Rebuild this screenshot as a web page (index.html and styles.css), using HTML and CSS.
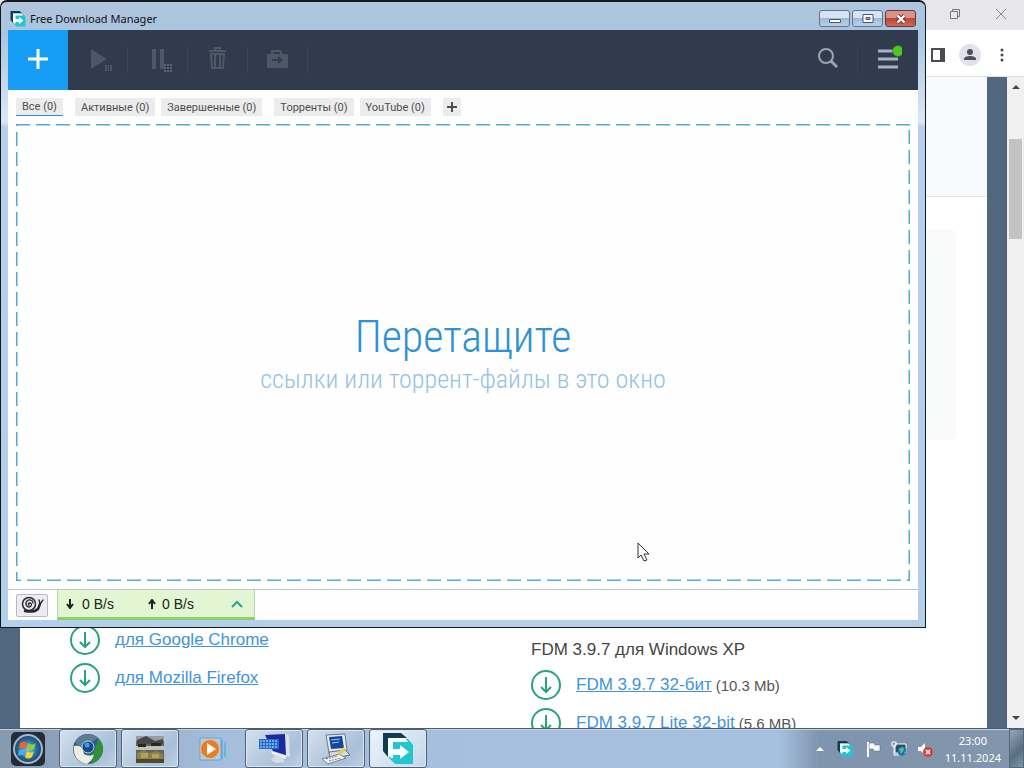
FILE: index.html
```html
<!DOCTYPE html>
<html lang="ru">
<head>
<meta charset="utf-8">
<title>Free Download Manager</title>
<link rel="stylesheet" href="styles.css">
</head>
<body>
<svg class="defs" aria-hidden="true">
  <symbol id="fdm" viewBox="0 0 32 32">
    <path d="M1 0h18l6 5H6v19l-5-6z" fill="#0e3c50"/>
    <path d="M9 6h17l5 6v19H13l-6-6V8z" fill="#22c6cf"/>
    <path d="M6 5h17l3 4H11v7h7v-4l9 7-9 7v-4h-7v3H9l-3-3z" fill="#f8ffff"/>
  </symbol>
  <symbol id="get" viewBox="0 0 30 30">
    <circle cx="15" cy="15" r="14" fill="none" stroke="#27a577" stroke-width="2"/>
    <path d="M15 7v15M10 17l5 5 5-5" fill="none" stroke="#27a577" stroke-width="2"/>
  </symbol>
</svg>

<main class="browser">
  <div class="browser-title">
    <button class="ghost" aria-label="Restore"><svg width="12" height="12" viewBox="0 0 12 12" fill="none" stroke="#77777c"><path d="M3.500 3V1.500h7v7H9"/><path d="M1.500 3.500h7v7h-7z"/></svg></button>
    <button class="ghost" aria-label="Close"><svg width="12" height="12" viewBox="0 0 12 12" fill="none" stroke="#85858a"><path d="M1 1l10 10M11 1L1 11"/></svg></button>
  </div>
  <div class="browser-tools">
    <button class="ghost" aria-label="Side panel"><svg width="14" height="14" viewBox="0 0 14 14"><path d="M1 1h12v12H1z" fill="none" stroke="#4a4c50" stroke-width="2"/><path d="M9 1h4v12H9z" fill="#4a4c50"/></svg></button>
    <button class="ghost" aria-label="Profile"><svg width="22" height="22" viewBox="0 0 22 22"><circle cx="11" cy="11" r="11" fill="#dfe2ea"/><circle cx="11" cy="8" r="3" fill="#4b505c"/><path d="M5 16v-1c0-2 3-3 6-3s6 1 6 3v1z" fill="#4b505c"/></svg></button>
    <button class="ghost menu" aria-label="Menu"><svg width="6" height="14" viewBox="0 0 6 14" fill="#45474b"><circle cx="3" cy="2" r="1.500"/><circle cx="3" cy="7" r="1.500"/><circle cx="3" cy="12" r="1.500"/></svg></button>
  </div>
  <div class="viewport">
    <div class="page">
      <div class="hero"></div>
      <div class="panel"></div>
      <div class="columns">
        <ul class="downloads">
          <li><svg class="get"><use href="#get"/></svg><a href="#chrome">для Google Chrome</a></li>
          <li><svg class="get"><use href="#get"/></svg><a href="#firefox">для Mozilla Firefox</a></li>
        </ul>
        <section class="xp">
          <h2>FDM 3.9.7 для Windows XP</h2>
          <ul class="downloads">
            <li><svg class="get"><use href="#get"/></svg><a href="#fdm32">FDM 3.9.7 32-бит</a><small>(10.3 Mb)</small></li>
            <li><svg class="get"><use href="#get"/></svg><a href="#lite32">FDM 3.9.7 Lite 32-bit</a><small>(5.6 MB)</small></li>
          </ul>
        </section>
      </div>
    </div>
    <div class="scrollbar">
      <svg width="8" height="4"><path d="M0 4l4-4 4 4z" fill="#45474b"/></svg>
      <div class="thumb"></div>
      <svg width="8" height="4"><path d="M0 0h8L4 4z" fill="#45474b"/></svg>
    </div>
  </div>
</main>

<section class="window" aria-label="Free Download Manager">
  <header class="titlebar">
    <svg class="app-icon"><use href="#fdm"/></svg>
    <h1>Free Download Manager</h1>
    <div class="caption">
      <button aria-label="Minimize"><svg width="12" height="10"><path d="M.5 5.500h11v3H.5z" fill="#fff" stroke="#46586f"/></svg></button>
      <button aria-label="Maximize"><svg width="12" height="10"><path d="M1 .5h10v8H1z" fill="#fff" stroke="#46586f"/><path d="M4 3.500h4v2H4z" fill="#9db7d5" stroke="#46586f"/></svg></button>
      <button class="close" aria-label="Close"><svg width="12" height="10"><path d="M2.500 1.500l7 7M9.500 1.500l-7 7" stroke="#6f3030" stroke-width="4"/><path d="M2.500 1.500l7 7M9.500 1.500l-7 7" stroke="#fff" stroke-width="2.400"/></svg></button>
    </div>
  </header>
  <div class="client">
    <nav class="toolbar">
      <button class="add" aria-label="Add"><svg width="20" height="20"><path d="M10 0v20M0 10h20" stroke="#fff" stroke-width="3"/></svg></button>
      <button class="tool" aria-label="Start"><svg width="28" height="28" fill="#4c5768"><path d="M7 4l16 10L7 24zM21 20h2v6h-2zM24 20h1v6h-1zM26 20h2v6h-2z"/></svg></button>
      <button class="tool" aria-label="Pause"><svg width="28" height="28" fill="#4c5768"><path d="M8 4h4v20H8zM16 4h4v20h-4z"/><path d="M20 20h8M20 23h8M20 26h8" stroke="#5a6576" stroke-width="2" stroke-dasharray="2 1"/></svg></button>
      <button class="tool" aria-label="Delete"><svg width="28" height="28" fill="none" stroke="#4c5768"><path d="M5 6h17M11 5V3h5v2" stroke-width="2"/><path d="M7 9h13l-1 14H8z" stroke-width="2"/><path d="M11 10v12M16 10v12" stroke-width="2"/></svg></button>
      <button class="tool" aria-label="Move"><svg width="28" height="28"><path d="M3 9h4V5h10l2 4h5v14H3z" fill="#4c5768"/><path d="M9 8h7M8 15h8" stroke="#303b4d" stroke-width="2"/><path d="M14 11l5 4-5 4z" fill="#303b4d"/></svg></button>
      <div class="tools-end">
        <button class="tool" aria-label="Search"><svg width="22" height="22" fill="none" stroke="#9aa3b2" stroke-width="2"><circle cx="9" cy="8" r="7"/><path d="M14 13l6 6" stroke-width="3"/></svg></button>
        <button class="tool" aria-label="Menu"><svg width="28" height="28"><path d="M4 6h20M4 14h20M4 22h20" stroke="#a8b1c1" stroke-width="3"/><circle cx="24" cy="6" r="5.500" fill="#4cc922" stroke="#2b573b" stroke-width=".5"/></svg></button>
      </div>
    </nav>
    <div class="tabs">
      <button class="active">Все (0)</button>
      <button>Активные (0)</button>
      <button>Завершенные (0)</button>
      <button class="group">Торренты (0)</button>
      <button>YouTube (0)</button>
      <button class="plus" aria-label="Add tab"><svg width="10" height="10"><path d="M5 0v10M0 5h10" stroke="#4d4d4d" stroke-width="2"/></svg></button>
    </div>
    <div class="dropzone">
      <svg class="dashes"><rect width="100%" height="100%" fill="none" stroke="#58a8ce" stroke-width="3" stroke-dasharray="14 6"/></svg>
      <p class="drop-title">Перетащите</p>
      <p class="drop-text">ссылки или торрент-файлы в это окно</p>
    </div>
    <footer class="status">
      <button class="snail" aria-label="Snail mode"><svg width="24" height="18" fill="none" stroke="#292b31" stroke-linecap="round"><path d="M5 15c5 1 10 1 13-2l2-5" stroke-width="2.500"/><circle cx="9" cy="8" r="6.500" fill="#ececf2" stroke-width="1.500"/><path d="M9 9c-1 0-1-2 1-2s2 4-1 4-4-4-2-6 6-1 6 2" stroke-width="1.300"/><path d="M20 8l-1-4M20 8l3-4" stroke-width="1.300"/></svg></button>
      <button class="speed">
        <svg width="8" height="10" fill="none" stroke="#222" stroke-width="2"><path d="M4 0v9M1 5l3 4 3-4"/></svg><span class="rate">0 B/s</span>
        <svg width="8" height="10" fill="none" stroke="#222" stroke-width="2"><path d="M4 10V1M1 5l3-4 3 4"/></svg><span class="rate up">0 B/s</span>
        <svg class="chevron" width="12" height="8" fill="none" stroke="#2aa58c" stroke-width="2"><path d="M1 7l5-5 5 5"/></svg>
      </button>
    </footer>
  </div>
</section>

<footer class="taskbar">
  <button class="start" aria-label="Start"><svg width="36" height="38" viewBox="0 0 36 38">
    <defs><radialGradient id="orb"><stop offset="0" stop-color="#70d3ef"/><stop offset=".6" stop-color="#2272a5"/><stop offset="1" stop-color="#27415e"/></radialGradient></defs>
    <rect x="1" y="2" width="34" height="34" rx="5" fill="#252c36"/><circle cx="18" cy="19" r="14" fill="url(#orb)" stroke="#a4b9cd" stroke-width="2"/>
    <path d="M10 13q4-3 7 0l-1 6q-4-2-7 0z" fill="#ec642c"/><path d="M18 13q4 3 8 0l-2 6q-4 3-7 0z" fill="#93ca3c"/><path d="M9 20q4-2 7 0l-1 6q-4-2-7 0z" fill="#4baaf0"/><path d="M17 21q4 3 7 0l-2 6q-4 3-7 0z" fill="#fad135"/></svg></button>
  <button class="task" aria-label="Chromium"><svg width="32" height="32" viewBox="0 0 32 32"><circle cx="16" cy="16" r="15" fill="#31598c"/><path d="M3 9A15 15 0 0 1 26 5l-8 5-8 8z" fill="#5e7d95"/><path d="M26 5a15 15 0 0 1-5 25l-5-5 7-8z" fill="#2f9137"/><path d="M2 13c8-1 9 3 10 8 4 2 8 2 10 0-1 5-4 8-7 10A15 15 0 0 1 2 13z" fill="#eceee0"/><circle cx="16" cy="14" r="6" fill="#164983" stroke="#b8d4ea"/><circle cx="15" cy="12" r="2.500" fill="#3f9be3"/></svg></button>
  <button class="task" aria-label="Game"><svg width="30" height="30" viewBox="0 0 30 30"><path d="M1 2h28v27H1z" fill="#656453"/><path d="M1 2h28v5H1z" fill="#9b9da0"/><path d="M2 6l9-4 9 5 8-2v5H2z" fill="#474847"/><path d="M1 12h28v4H1z" fill="#bfc1bd"/><path d="M3 10h8v3H3zM16 9h10v3H16z" fill="#262923"/><path d="M2 19l7-3 5 3 7-2 7 3v5H2z" fill="#8a8150"/><path d="M6 19h7v5H6zM17 20h7v4h-7z" fill="#b4a15c"/><path d="M1 25h28v4H1z" fill="#51482b"/></svg></button>
  <button class="task pinned" aria-label="Media Player"><svg width="28" height="28" viewBox="0 0 28 28"><path d="M2 3h21v22H2z" fill="#a9d0ef" stroke="#6aa2d0"/><path d="M24 5v19M27 7v15" stroke="#40a2dd"/><circle cx="12" cy="14" r="9.500" fill="#e67d29" stroke="#f8bd82"/><path d="M9 8l9 6-9 6z" fill="#fff"/></svg></button>
  <button class="task" aria-label="Keyboard"><svg width="34" height="32" viewBox="0 0 34 32"><path d="M8 2l20-1 4 22-16-5z" fill="#182b9f"/><path d="M28 1l4 1 1 22-4-1z" fill="#dce0e8"/><path d="M14 18l16 5-2 3-13-5z" fill="#edf0f3"/><path d="M18 22l8 3 2 4-9 1-5-3z" fill="#d6dce3"/><path d="M2 6h20v10H2z" fill="#2469cd"/><path d="M3 8h18M3 11h18M3 14h18" stroke="#c5e6fa" stroke-dasharray="2 1"/></svg></button>
  <button class="task" aria-label="System"><svg width="32" height="32" viewBox="0 0 32 32"><path d="M6 2l19-1 2 17-18 2z" fill="#e6e9ed" stroke="#667891"/><path d="M9 4l13-1 2 12-13 1z" fill="#154699"/><path d="M11 7l9-1M12 10l7-1" stroke="#8cd3f0"/><path d="M9 19l16-2 5 5-20 4z" fill="#d6dce1" stroke="#67717d"/><path d="M2 26l17-5 7 4-18 6z" fill="#f3f4f5" stroke="#777f88"/><path d="M6 26l12-3M9 28l12-3" stroke="#6f7985" stroke-dasharray="2 1"/><path d="M17 20l7-6 2 3-6 5z" fill="#e3c96b"/></svg></button>
  <button class="task current" aria-label="Free Download Manager"><svg width="32" height="32"><use href="#fdm"/></svg></button>
  <div class="tray">
    <svg width="8" height="4"><path d="M0 4l4-4 4 4z" fill="#fff"/></svg>
    <svg class="app-icon"><use href="#fdm"/></svg>
    <svg width="16" height="16"><path d="M3 1v15" stroke="#fff" stroke-width="2"/><path d="M4 2h5l1 2h5v6H9L8 8H4z" fill="#f4f6f8" stroke="#57677b" stroke-width=".5"/></svg>
    <svg width="16" height="16"><path d="M4 3h11v9H4z" fill="#2f4a66" stroke="#fff"/><path d="M1 1h4v4H1zM3 5v9h5" fill="none" stroke="#fff"/><circle cx="11" cy="10" r="4.500" fill="#1e6eaa"/><path d="M8 8l4-2 1 3-3 4zM13 11l2-1-2 4z" fill="#55bf91"/></svg>
    <svg width="16" height="16"><path d="M1 6h3l4-4v12L4 10H1z" fill="#fff"/><circle cx="11" cy="11" r="5" fill="#d6423b"/><path d="M9 9l4 4M13 9l-4 4" stroke="#fff" stroke-width="1.500"/></svg>
    <div class="clock"><time>23:00</time><time>11.11.2024</time></div>
    <button class="show-desktop" aria-label="Show desktop"></button>
  </div>
</footer>

<svg class="cursor" width="14" height="21" viewBox="0 0 14 21"><path d="M1 1v15l3-3 3 6 3-1-3-6h5z" fill="#fff" stroke="#333"/></svg>
</body>
</html>
```

FILE: styles.css
```css
* { box-sizing: border-box; }
body {
  margin: 0;
  height: 100vh;
  display: flex;
  flex-direction: column;
  overflow: hidden;
  background: #50677f;
  font-family: "Liberation Sans", Arial, sans-serif;
}
button { font: inherit; color: inherit; border: 0; padding: 0; background: none; display: flex; align-items: center; justify-content: center; }
h1, h2, p, ul { margin: 0; padding: 0; font-weight: 400; }
svg { flex: none; }
.defs { position: absolute; width: 0; height: 0; }

.browser { flex: 1; min-height: 0; display: flex; flex-direction: column; }
.browser-title, .browser-tools { flex: none; display: flex; justify-content: flex-end; align-items: center; }
.browser-title { height: 30px; background: #e6e6eb; gap: 34px; padding: 0 17px 2px; }
.browser-tools { height: 47px; background: #fff; border-bottom: 1px solid #dfe3e8; gap: 14px; padding: 4px 19px 0; }
.browser-tools .menu { margin-left: 4px; }
.viewport { flex: 1; min-height: 0; display: flex; }
.page { flex: 1; overflow: hidden; margin: 0 20px; background: #fff; }
.hero { height: 120px; background: #f7f9fa; border-bottom: 1px solid #dfe8ee; }
.panel { height: 211px; margin: 32px 31px 181px; border-radius: 6px; background: #f9fafa; }
.columns { display: grid; grid-template-columns: 461px 1fr; padding-left: 50px; }
.downloads { list-style: none; font-size: 17px; }
.downloads li { height: 38px; display: flex; align-items: center; white-space: nowrap; }
.get { width: 30px; height: 30px; margin-right: 15px; }
.downloads a { color: #4293dc; }
.downloads small { font-size: 15px; color: #555; margin-left: 4px; }
.xp { padding-top: 13px; }
.xp h2 { font-size: 17px; line-height: 32px; color: #444; }
.scrollbar { width: 17px; background: #f0f0f0; display: flex; flex-direction: column; align-items: center; padding: 8px 0; }
.thumb { width: 13px; height: 100px; margin: 50px 0 auto; background: #c3c3c4; }

.window {
  position: absolute;
  top: 0;
  left: 0;
  width: 926px;
  height: 628px;
  display: flex;
  flex-direction: column;
  padding: 0 7px 7px;
  border: 1px solid #101820;
  border-top-width: 2px;
  border-radius: 7px 7px 0 0;
  background: linear-gradient(#b0c5dc, #a9c5e1 30px, #dbe7f6 120px, #b7cfeb 125px, #b4cfe9);
}
.titlebar { height: 28px; flex: none; display: flex; align-items: center; gap: 4px; padding: 5px 2px 0; }
.app-icon { width: 16px; height: 16px; }
.titlebar h1 { font: 11px/16px "Noto Sans", sans-serif; color: #111; }
.caption { margin-left: auto; display: flex; gap: 2px; }
.caption button { width: 31px; height: 17px; border: 1px solid #61748d; border-radius: 3px; background: linear-gradient(#d6e3f2 45%, #9eb8d5 50%, #bdd1e7); }
.caption .close { border-color: #6d3738; background: linear-gradient(#d99488 45%, #bc4736 50%, #cd6859); }
.client { flex: 1; min-height: 0; display: flex; flex-direction: column; background: #fefefe; }
.toolbar { height: 60px; flex: none; display: flex; background: #303b4e; }
.toolbar button { width: 60px; height: 60px; padding: 0 1px 2px 0; }
.add { background: #169cf5; }
.tool { background: linear-gradient(#3a4557, #3a4557) right center / 1px 28px no-repeat; }
.tools-end { margin-left: auto; display: flex; }
.tools-end .tool:last-child { background: none; }
.tabs { height: 34px; flex: none; display: flex; align-items: center; gap: 6px; padding: 0 8px; color: #4d4d4d; }
.tabs button { height: 18px; padding: 0 6px; background: #ececec; font: 11px/17px Roboto, sans-serif; white-space: nowrap; }
.tabs .active { border-bottom: 1px solid #2b8ed0; margin-right: 6px; }
.tabs .group { margin-left: 6px; }
.tabs .plus { width: 18px; margin-left: 6px; padding: 0; }
.dropzone { flex: 1; position: relative; margin: 0 8px 8px; display: flex; flex-direction: column; align-items: center; justify-content: center; padding-top: 4px; text-align: center; }
.dashes { position: absolute; inset: 0; width: 100%; height: 100%; }
.drop-title { font: 300 44px/48px "Roboto Condensed", Roboto, sans-serif; color: #2e91d5; }
.drop-text { font: 300 26px/36px "Roboto Condensed", Roboto, sans-serif; color: #95c2e4; }
.status { height: 31px; flex: none; display: flex; align-items: stretch; gap: 9px; padding-left: 8px; border-top: 1px solid #bfc3c3; }
.snail { width: 32px; height: 23px; align-self: center; border: 1px solid #b9bac0; border-radius: 2px; background: #ececf2; }
.speed { width: 198px; padding: 0 11px 0 8px; justify-content: flex-start; background: #e2f6d3; border: solid #b9d6a8; border-width: 0 1px 3px; border-bottom-color: #8dcf69; font-size: 14px; color: #222; }
.rate { width: 74px; padding-left: 8px; text-align: left; }
.rate.up { padding-left: 6px; }
.chevron { margin-left: auto; }

.taskbar { height: 40px; flex: none; display: flex; gap: 4px; border-top: 1px solid #4c5b6d; background: linear-gradient(90deg, #8599af, #a5bedb 22%, #a6c1df 76%, #7f94ae 80%, #8295ab); box-shadow: inset 0 1px #c5d4e4; }
.start { width: 55px; }
.task { width: 58px; border: 1px solid #4c6078; border-radius: 3px; background: linear-gradient(135deg, #d4e0ed, #a9bfd7 70%, #bdd0e5); box-shadow: inset 0 0 0 1px #dce7f3; }
.pinned { border-color: transparent; background: none; box-shadow: none; }
.current { background: linear-gradient(135deg, #edf4fa, #c2d6e9); }
.tray { margin-left: auto; display: flex; align-items: center; gap: 10px; color: #fff; font: 11px/17px "Noto Sans", sans-serif; }
.tray svg:first-child { margin-right: 3px; }
.tray .app-icon { margin-right: 2px; }
.clock { display: flex; flex-direction: column; align-items: center; margin-left: 2px; }
.show-desktop { width: 15px; align-self: stretch; margin-left: -2px; border: 1px solid #53677d; background: linear-gradient(135deg, #96a6b6, #586e82 60%, #8297aa); }
.cursor { position: absolute; left: 637px; top: 542px; }
```
